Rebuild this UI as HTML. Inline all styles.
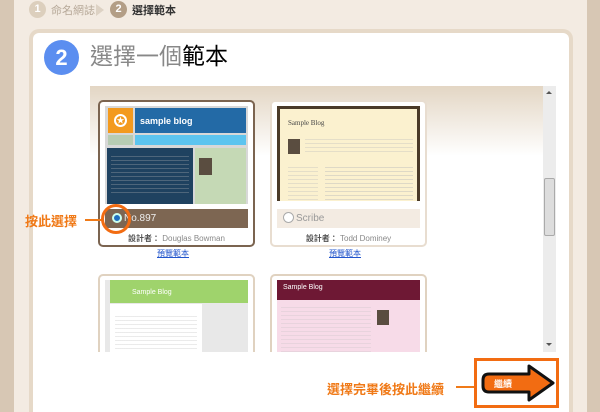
<!DOCTYPE html>
<html style="width:600px;height:412px;overflow:hidden"><head><meta charset="utf-8"><style>
*{margin:0;padding:0;box-sizing:border-box}
body{width:600px;height:412px;overflow:hidden;position:relative;background:#f3ebe2;font-family:"Liberation Sans","Noto Sans CJK TC",sans-serif}
.a{position:absolute}
.lines{background:repeating-linear-gradient(#bbb 0 1px,transparent 1px 4px)}
</style></head><body>
<div class="a" style="left:0;top:0;width:14px;height:412px;background:#d7c7b4"></div>
<div class="a" style="left:587px;top:0;width:13px;height:412px;background:#d7c7b4"></div>
<!-- steps -->
<div class="a" style="left:29px;top:1px;width:17px;height:17px;border-radius:50%;background:#dccfbd;color:#fff;font-size:11px;font-weight:bold;text-align:center;line-height:17px">1</div>
<div class="a" style="left:51px;top:2px;font-size:11px;color:#b6a898">命名網誌</div>
<div class="a" style="left:96px;top:4px;width:0;height:0;border-left:8px solid #ddd2c4;border-top:6px solid transparent;border-bottom:6px solid transparent"></div>
<div class="a" style="left:110px;top:1px;width:17px;height:17px;border-radius:50%;background:#b39e86;color:#fff;font-size:11px;font-weight:bold;text-align:center;line-height:17px">2</div>
<div class="a" style="left:132px;top:2px;font-size:11px;font-weight:bold;color:#333">選擇範本</div>
<!-- panel -->
<div class="a" style="left:29px;top:29px;width:544px;height:383px;background:#fff;border:4px solid #e6d9c8;border-bottom:0;border-radius:10px 10px 0 0"></div>
<div class="a" style="left:44px;top:40px;width:35px;height:35px;border-radius:50%;background:#5b8ef0;color:#fff;font-size:22px;font-weight:bold;text-align:center;line-height:35px">2</div>
<div class="a" style="left:90px;top:42px;font-size:23px;color:#888;line-height:28px">選擇一個<span style="color:#000">範本</span></div>
<!-- scroll area -->
<div class="a" style="left:90px;top:86px;width:453px;height:266px;overflow:hidden;background:linear-gradient(#e3d6c4 0,#fff 70px)">
 <div class="a" style="left:8px;top:14px;width:157px;height:147px;background:#fff;border:2px solid #7b6450;border-radius:5px">
  <div class="a" style="left:5px;top:4px;width:143px;height:98px;background:#d8d8d8">
   <div class="a" style="left:3px;top:2px;width:25px;height:25px;background:#f39a1e"><div style="margin:6px auto;width:13px;height:13px;border-radius:50%;border:2px solid #fff;color:#fff;font-size:8px;text-align:center;line-height:9px">★</div></div>
   <div class="a" style="left:30px;top:2px;width:111px;height:25px;background:#236aa6;color:#fff;font-size:9px;font-weight:bold;padding:8px 0 0 5px">sample blog</div>
   <div class="a" style="left:3px;top:29px;width:25px;height:10px;background:#b7ccb3"></div>
   <div class="a" style="left:30px;top:29px;width:111px;height:10px;background:#5cc4ef"></div>
   <div class="a" style="left:2px;top:42px;width:86px;height:56px;background:#1f4260"><div class="lines" style="margin:8px 4px;height:40px;opacity:.3"></div></div>
   <div class="a" style="left:90px;top:42px;width:51px;height:56px;background:#c5d9b5"><div class="a" style="left:4px;top:10px;width:13px;height:17px;background:#5a4d40"></div></div>
  </div>
  <div class="a" style="left:5px;top:107px;width:143px;height:19px;background:#7d6652;color:#eee;font-size:10px;padding:4px 0 0 19px">No.897</div>
  <div class="a" style="left:12px;top:111px;width:10px;height:10px;border-radius:50%;background:#1f6fbf;border:2px solid #cfe"></div>
  <div class="a" style="left:0;top:131px;width:153px;text-align:center;font-size:8px;color:#888"><b style="color:#555">設計者：</b> Douglas Bowman</div>
 </div>
 <div class="a" style="left:67px;top:162px;font-size:8px;color:#2255cc;text-decoration:underline">預覽範本</div>
 <div class="a" style="left:180px;top:14px;width:157px;height:147px;background:#fff;border:2px solid #e8ddd0;border-radius:5px">
  <div class="a" style="left:5px;top:4px;width:143px;height:95px;background:#fbf1cf;border:3px solid #4a3a28;border-bottom:0">
   <div class="a" style="left:8px;top:10px;font-family:'Liberation Serif',serif;font-size:7px;color:#444">Sample Blog</div>
   <div class="a" style="left:8px;top:30px;width:12px;height:15px;background:#5a4d40"></div>
   <div class="a lines" style="left:25px;top:30px;width:108px;height:15px;opacity:.35"></div>
   <div class="a lines" style="left:8px;top:58px;width:30px;height:35px;opacity:.35"></div>
   <div class="a lines" style="left:45px;top:58px;width:88px;height:35px;opacity:.45"></div>
  </div>
  <div class="a" style="left:5px;top:107px;width:143px;height:19px;background:#f3ebe2;color:#999;font-size:10px;padding:4px 0 0 19px">Scribe</div>
  <div class="a" style="left:11px;top:110px;width:11px;height:11px;border-radius:50%;background:#fff;border:1px solid #aaa"></div>
  <div class="a" style="left:0;top:131px;width:153px;text-align:center;font-size:8px;color:#888"><b style="color:#555">設計者：</b> Todd Dominey</div>
 </div>
 <div class="a" style="left:239px;top:162px;font-size:8px;color:#2255cc;text-decoration:underline">預覽範本</div>
 <div class="a" style="left:8px;top:188px;width:157px;height:100px;background:#fff;border:2px solid #e0d2c0;border-radius:5px">
  <div class="a" style="left:5px;top:4px;width:143px;height:80px;background:#e8e8e8">
   <div class="a" style="left:5px;top:0;width:138px;height:23px;background:#9fd36c;color:#fff;font-size:7px;padding:9px 0 0 22px">Sample Blog</div>
   <div class="a" style="left:5px;top:24px;width:92px;height:56px;background:#fff"><div class="lines" style="margin:12px 5px;height:40px;opacity:.3"></div></div>
  </div>
 </div>
 <div class="a" style="left:180px;top:188px;width:157px;height:100px;background:#fff;border:2px solid #e0d2c0;border-radius:5px">
  <div class="a" style="left:5px;top:4px;width:143px;height:80px;background:#f7dbe8">
   <div class="a" style="left:0;top:0;width:143px;height:20px;background:#6e1834;color:#fff;font-size:7px;padding:4px 0 0 6px">Sample Blog</div>
   <div class="a" style="left:100px;top:30px;width:12px;height:15px;background:#5a4d40"></div>
   <div class="a lines" style="left:4px;top:27px;width:90px;height:45px;opacity:.25"></div>
  </div>
 </div>
</div>
<div class="a" style="left:543px;top:86px;width:13px;height:266px;background:#ececec">
 <div class="a" style="left:3px;top:5px;border-left:3px solid transparent;border-right:3px solid transparent;border-bottom:3px solid #555"></div>
 <div class="a" style="left:1px;top:92px;width:11px;height:58px;background:#ddd;border:1px solid #aaa;border-radius:2px"></div>
 <div class="a" style="left:3px;top:257px;border-left:3px solid transparent;border-right:3px solid transparent;border-top:3px solid #555"></div>
</div>
<!-- callouts -->
<div class="a" style="left:25px;top:211px;font-size:13px;font-weight:bold;color:#f07a18">按此選擇</div>
<div class="a" style="left:85px;top:219px;width:17px;height:2px;background:#f07a18"></div>
<div class="a" style="left:101px;top:204px;width:30px;height:30px;border-radius:50%;border:3px solid #f26c12"></div>
<div class="a" style="left:327px;top:379px;font-size:13px;font-weight:bold;color:#f07a18">選擇完畢後按此繼續</div>
<div class="a" style="left:456px;top:386px;width:18px;height:2px;background:#f07a18"></div>
<div class="a" style="left:474px;top:358px;width:85px;height:50px;border:3px solid #f26c12;background:#fff">
 <svg width="79" height="44" style="position:absolute;left:0;top:0"><path d="M12 13 H52 V5 L76 22 L52 39 V31 H12 Q6 31 6 25 V19 Q6 13 12 13 Z" fill="#f26c12" stroke="#111" stroke-width="3" stroke-linejoin="round"/><text x="17" y="26" font-size="9" font-weight="bold" fill="#fff" font-family="Liberation Sans,Noto Sans CJK TC,sans-serif">繼續</text></svg>
</div>
</body></html>
